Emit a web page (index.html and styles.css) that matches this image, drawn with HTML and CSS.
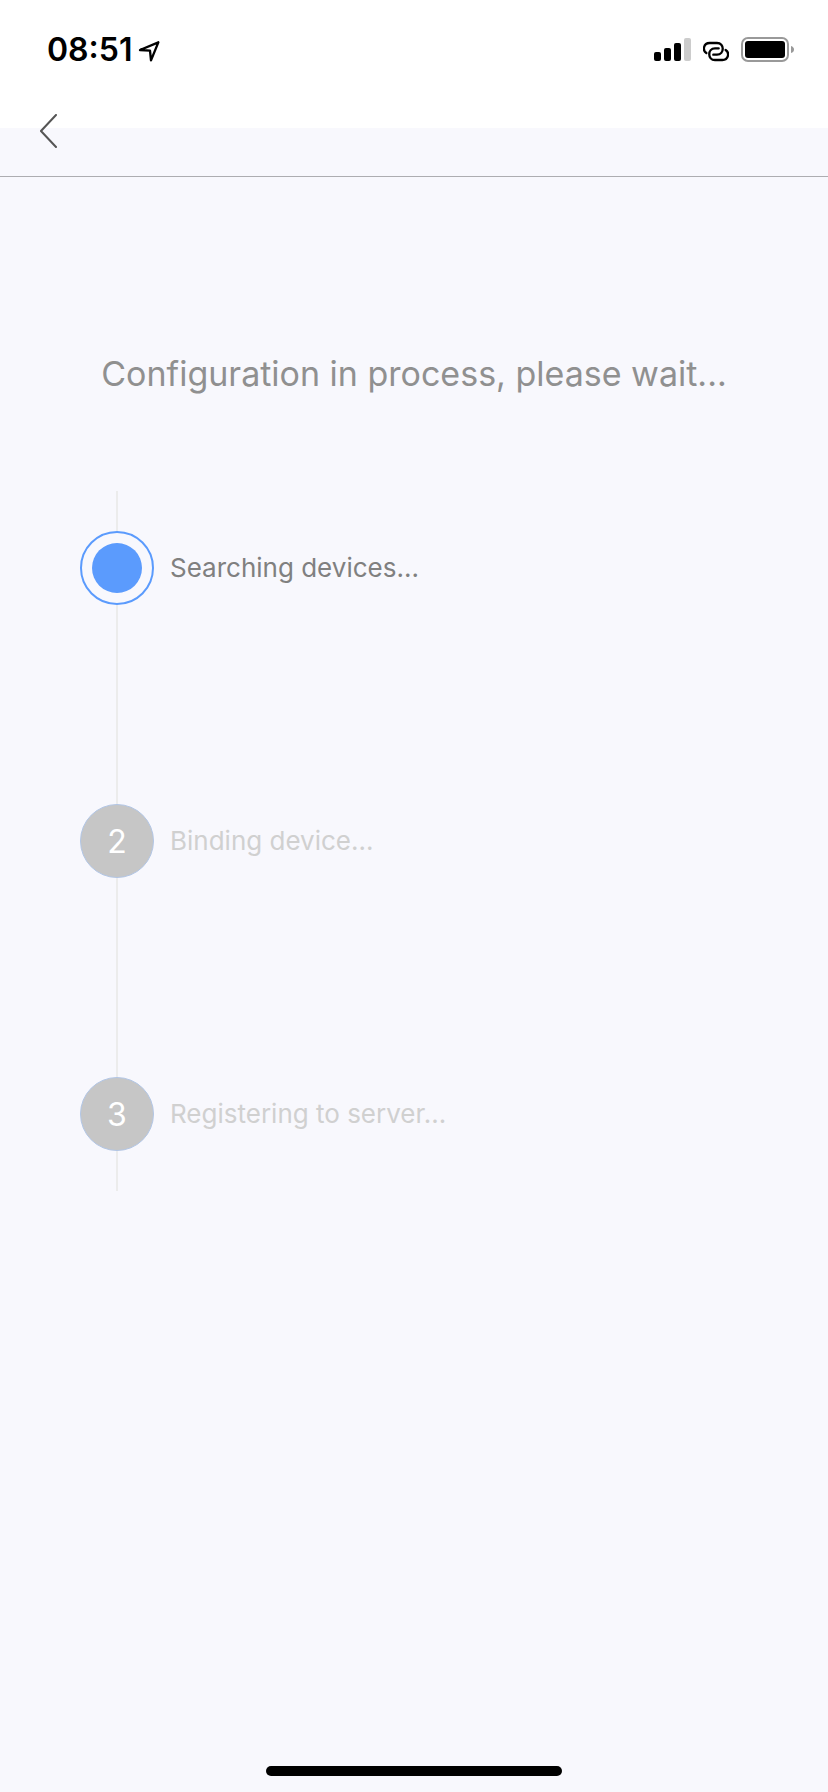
FILE: index.html
```
<!DOCTYPE html>
<html lang="en">
<head>
    <meta charset="UTF-8">
    <meta name="viewport" content="width=device-width, initial-scale=1.0">
    <title>Device configuration</title>
    <link rel="stylesheet" href="styles.css">
</head>
<body>

    <header class="top">
        <div class="status-bar">
            <div class="status-left">
                <span class="time">08:51</span>
                <svg class="location" width="24" height="24" viewBox="0 0 72 72" fill="none" stroke="#000" stroke-width="7" stroke-linejoin="round">
                    <path d="M9 36 L64 13 L42 67 L39 38 Z"/>
                </svg>
            </div>
            <div class="status-right">
                <svg width="37" height="25" viewBox="0 0 37 25">
                    <rect x="0" y="15" width="7" height="9" rx="2"/>
                    <rect x="10" y="11" width="7" height="13" rx="2"/>
                    <rect x="20" y="6" width="7" height="18" rx="2"/>
                    <rect x="30" y="1" width="7" height="23" rx="2" fill="#ccc"/>
                </svg>
                <svg width="26" height="25" viewBox="216 51 78 75" fill="none" stroke="#000" stroke-width="7" stroke-linecap="round">
                    <path d="M226 99 C214 91 217 69 236 69 H258 C281 69 281 104 258 104 H247"/>
                    <path d="M284 90 C296 98 293 120 274 120 H252 C229 120 229 85 252 85 H263"/>
                </svg>
                <svg width="53" height="25" viewBox="0 0 53 25">
                    <rect x="1" y="1" width="46" height="23" rx="6" fill="none" stroke="#999" stroke-width="2"/>
                    <rect x="4" y="4" width="40" height="17" rx="3"/>
                    <path d="M50 9 Q53 10 53 12.5 Q53 15 50 16 Z" fill="#999"/>
                </svg>
            </div>
        </div>
        <nav class="nav-bar">
            <button class="back" type="button" aria-label="Back">
                <svg width="20" height="34" viewBox="0 0 20 34" fill="none" stroke="#555" stroke-width="2" stroke-linecap="round">
                    <path d="M16 1 L1 17 L16 33"/>
                </svg>
            </button>
        </nav>
    </header>

    <main class="content">
        <h1>Configuration in process, please wait...</h1>

        <ol class="steps">
            <li class="step active">
                <span class="circle"><span class="dot"></span></span>
                <span class="label">Searching devices...</span>
            </li>
            <li class="step">
                <span class="circle">2</span>
                <span class="label">Binding device...</span>
            </li>
            <li class="step">
                <span class="circle">3</span>
                <span class="label">Registering to server...</span>
            </li>
        </ol>
    </main>

    <footer class="bottom">
        <div class="home-indicator"></div>
    </footer>

</body>
</html>
```
FILE: styles.css
```
* {
    box-sizing: border-box;
}

body {
    font-family: Inter, "Liberation Sans", sans-serif;
    background-color: #f8f8fd;
    display: flex;
    flex-direction: column;
    min-height: 100vh;
    margin: 0;
}

/* the white area ends halfway through the nav bar */
.top {
    background: linear-gradient(#fff 128px, #f8f8fd 128px);
    border-bottom: 1px solid #adadb1;
}

.status-bar {
    display: flex;
    justify-content: space-between;
    align-items: center;
    height: 99px;
    padding: 0 34px 0 47px;
}

.status-left {
    display: flex;
    align-items: center;
    gap: 5px;
}

.time {
    font-size: 32px;
    font-weight: 600;
    line-height: 39px;
}

.status-right {
    display: flex;
    align-items: center;
    gap: 12px;
}

.nav-bar {
    display: flex;
    height: 77px;
    padding: 0 24px;
}

.back {
    display: flex;
    align-items: center;
    height: 64px;
    padding: 0 16px;
    border: none;
    background: none;
    cursor: pointer;
}

.content {
    flex: 1;
    padding: 172px 80px 0;
}

h1 {
    margin: 0;
    font-size: 34px;
    font-weight: 400;
    line-height: 50px;
    text-align: center;
    color: #909090;
}

/* vertical line runs behind the circles */
.steps {
    display: flex;
    flex-direction: column;
    gap: 199px;
    margin: 92px 0 0;
    padding: 40px 0;
    list-style: none;
    background: linear-gradient(#ececec, #ececec) 36px 0 / 2px 100% no-repeat;
}

.step {
    display: flex;
    align-items: center;
    gap: 16px;
    color: #d0d0d0;
}

.circle {
    display: flex;
    align-items: center;
    justify-content: center;
    width: 74px;
    height: 74px;
    border: 1px solid #b2c6e6;
    border-radius: 50%;
    background-color: #c6c6c6;
    color: #fff;
    font-size: 32px;
}

.label {
    font-size: 26px;
    line-height: 32px;
}

.active {
    color: #808080;
}

.active .circle {
    border: 2px solid #5b9bfd;
    background-color: #f8f8fd;
}

.dot {
    width: 50px;
    height: 50px;
    border-radius: 50%;
    background-color: #5b9bfd;
}

.bottom {
    display: flex;
    justify-content: center;
    padding-bottom: 16px;
}

.home-indicator {
    width: 296px;
    height: 10px;
    border-radius: 5px;
    background-color: #000;
}
```
